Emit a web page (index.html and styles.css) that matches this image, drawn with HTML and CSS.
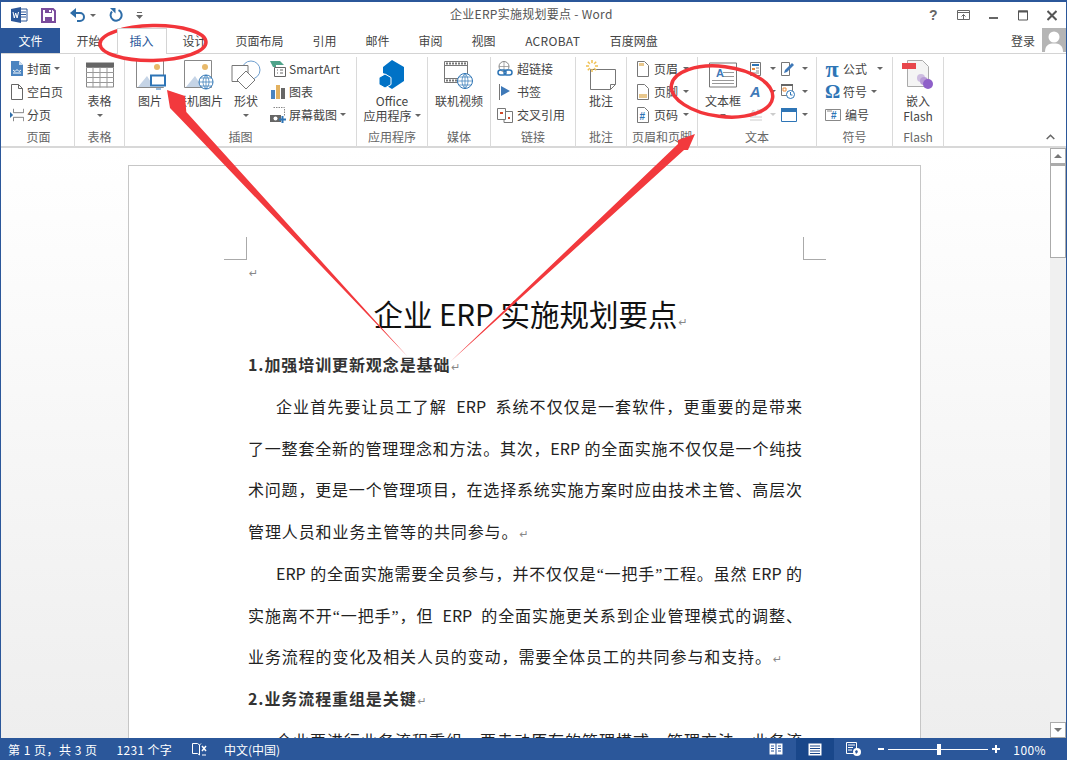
FILE: index.html
```html
<!DOCTYPE html>
<html lang="zh-CN">
<head>
<meta charset="utf-8">
<title>企业ERP实施规划要点 - Word</title>
<link rel="stylesheet" href="styles.css">
</head>
<body>
<div class="window">
  <header class="titlebar">
    <div class="qat">
      <svg class="qi w-logo" width="17" height="16" viewBox="0 0 17 16"><path d="M9 2h7v12H9z" fill="#fff" stroke="#2b579a"/><path d="M10 5h5M10 7.5h5M10 10h5" stroke="#2b579a"/><path d="M0 2l10-2v16L0 14z" fill="#2b579a"/><path d="M2 5l1.3 6 1.4-5 1.4 5L7.500 5" fill="none" stroke="#fff"/></svg>
      <svg class="qi save" width="15" height="15" viewBox="0 0 15 15"><path d="M1 1h11l2 2v11H1z" fill="none" stroke="#7a4c9c" stroke-width="2"/><path d="M4 1h7v4H4zM4 9h7v5H4z" fill="#7a4c9c"/><path d="M8 2h2v2H8z" fill="#fff"/></svg>
      <svg class="qi undo" width="16" height="14" viewBox="0 0 16 14"><path d="M2 5h8a4 4 0 0 1 0 8H7" fill="none" stroke="#2e6da8" stroke-width="2"/><path d="M6 0v10L0 5z" fill="#2e6da8"/></svg>
      <span class="dd qdd"></span>
      <svg class="qi redo" width="14" height="14" viewBox="0 0 14 14"><path d="M9.500 2.200A5.500 5.500 0 1 1 3 3.500" fill="none" stroke="#2e6da8" stroke-width="2"/><path d="M1 0h5.500v5.500z" fill="#2e6da8"/></svg>
      <svg class="qi more" width="7" height="8" viewBox="0 0 7 8"><path d="M1 1.500h5" stroke="#666"/><path d="M0 4h7L3.500 8z" fill="#666"/></svg>
    </div>
    <div class="doc-title">企业ERP实施规划要点 - Word</div>
    <div class="winctl">
      <span class="help">?</span>
      <svg width="13" height="11" viewBox="0 0 13 11"><path d="M.5.500h12v9H.5z" fill="none" stroke="#666"/><path d="M.5 2.500h12" stroke="#666"/><path d="M6.500 9V4.500M4.500 6.500l2-2 2 2" fill="none" stroke="#666"/></svg>
      <svg width="10" height="11" viewBox="0 0 10 11"><path d="M0 8h9" stroke="#666" stroke-width="2"/></svg>
      <svg width="10" height="11" viewBox="0 0 10 11"><path d="M.5 1h9v9h-9z" fill="none" stroke="#555"/><path d="M0 1.500h10" stroke="#555" stroke-width="2"/></svg>
      <svg width="10" height="11" viewBox="0 0 10 11"><path d="M.5 1l9 9M9.500 1l-9 9" stroke="#555" stroke-width="2"/></svg>
    </div>
  </header>

  <nav class="tabs">
    <div class="tab-file">文件</div>
    <div class="tab-list">
      <div class="tab">开始</div>
      <div class="tab tab-active">插入</div>
      <div class="tab">设计</div>
      <div class="tab">页面布局</div>
      <div class="tab">引用</div>
      <div class="tab">邮件</div>
      <div class="tab">审阅</div>
      <div class="tab">视图</div>
      <div class="tab tab-acro">ACROBAT</div>
      <div class="tab">百度网盘</div>
    </div>
    <div class="login">登录</div>
    <svg class="avatar" width="24" height="24" viewBox="0 0 24 24"><path d="M0 0h24v24H0z" fill="#b5b5b5"/><circle cx="12" cy="9" r="5.500" fill="#fff"/><path d="M3 24c0-7 4-8.500 9-8.500s9 1.500 9 8.500z" fill="#fff"/></svg>
  </nav>

  <section class="ribbon">
    <div class="group g-page">
      <div class="gbody col-small">
        <div class="si"><svg width="14" height="16" viewBox="0 0 14 16"><path d="M1 0h8l4 4v11H1z" fill="#4b84c0"/><path d="M9 0v4h4z" fill="#cfe0f0"/><path d="M3 9l2 1.500 2-2 2 2 2-1.500M3 12h8" fill="none" stroke="#fff"/></svg><span>封面</span><i class="dd"></i></div>
        <div class="si"><svg width="14" height="16" viewBox="0 0 14 16"><path d="M1.500.500h7l4 4v11h-11z" fill="#fff" stroke="#666"/><path d="M8.500.500v4h4" fill="none" stroke="#666"/></svg><span>空白页</span></div>
        <div class="si"><svg width="14" height="16" viewBox="0 0 18 16"><path d="M4.500 0v5h13V0M4.500 16v-5h13v5" fill="none" stroke="#666"/><path d="M0 4l4 4-4 4z" fill="#2e6da8"/></svg><span>分页</span></div>
      </div>
      <div class="glabel">页面</div>
    </div>

    <div class="group g-table">
      <div class="gbody center">
        <div class="lb">
          <svg width="28" height="25" viewBox="0 0 28 25"><path d="M0 0h28v5H0z" fill="#666"/><path d="M.5 5h27v19.500H.5z" fill="#fff" stroke="#888"/><path d="M0 10h28M0 15h28M0 20h28M7 5v20M14 5v20M21 5v20" stroke="#999"/></svg>
          <span class="lt">表格</span><i class="dd db"></i>
        </div>
      </div>
      <div class="glabel">表格</div>
    </div>

    <div class="group g-illus">
      <div class="gbody illus">
        <div class="lb w-pic">
          <svg width="30" height="30" viewBox="0 0 30 30"><path d="M.5.500h27v27H.5z" fill="#fff" stroke="#888"/><circle cx="21" cy="7" r="3" fill="#e8b96a"/><path d="M2 27l9-11 7 11z" fill="#c5d4e6"/><path d="M14 16h16v11H14z" fill="#fff"/><path d="M15 15.500h14v10H15z" fill="#fff" stroke="#2e75b6" stroke-width="2"/><path d="M20 29h5" stroke="#2e75b6"/></svg>
          <span class="lt">图片</span>
        </div>
        <div class="lb w-online">
          <svg width="30" height="30" viewBox="0 0 30 30"><path d="M.5.500h27v27H.5z" fill="#fff" stroke="#888"/><circle cx="21" cy="7" r="3" fill="#e8b96a"/><path d="M2 27l9-11 7 11z" fill="#c5d4e6"/><circle cx="22" cy="22" r="7" fill="#fff" stroke="#2e75b6"/><path d="M15 22h14M22 15v14M16.500 18h11M16.500 26h11M22 15c-4 4-4 10 0 14M22 15c4 4 4 10 0 14" fill="none" stroke="#2e75b6" stroke-width=".7"/></svg>
          <span class="lt">联机图片</span>
        </div>
        <div class="lb w-shape">
          <svg width="30" height="30" viewBox="0 0 30 30"><circle cx="20" cy="10" r="9" fill="#fff" stroke="#6f9fcf"/><path d="M1 5.500h16v16H1z" fill="#fff" stroke="#777"/><path d="M15 11l9 9-9 9-9-9z" fill="#fff" stroke="#777"/></svg>
          <span class="lt">形状</span><i class="dd db"></i>
        </div>
        <div class="col-small col-illus">
          <div class="si"><svg width="16" height="16" viewBox="0 0 16 16"><path d="M0 0h10l4 4H6v2H3z" fill="#4fa38a"/><path d="M4.500 6.500h11v9h-11z" fill="#fff" stroke="#666"/><path d="M7 9h1M7 12h1M10 9h3M10 12h3" stroke="#666"/></svg><span>SmartArt</span></div>
          <div class="si"><svg width="16" height="16" viewBox="0 0 16 16"><path d="M1 6h4v9H1z" fill="#4b84c0"/><path d="M6 1h4v14H6z" fill="#e3b15f"/><path d="M11 4h4v11h-4z" fill="#666"/></svg><span>图表</span></div>
          <div class="si"><svg width="16" height="16" viewBox="0 0 16 16"><path d="M3.500.500h11v9" fill="none" stroke="#888" stroke-dasharray="1.500 1"/><path d="M0 8h11v7H0z" fill="#666"/><circle cx="5.500" cy="11.500" r="2" fill="#fff"/><path d="M9 12.500h7M12.500 9v7" stroke="#2e75b6" stroke-width="2"/></svg><span>屏幕截图</span><i class="dd"></i></div>
        </div>
      </div>
      <div class="glabel">插图</div>
    </div>

    <div class="group g-apps">
      <div class="gbody center">
        <div class="lb">
          <svg width="28" height="30" viewBox="0 0 28 30"><path d="M14 0l12 7v14l-12 8-5-3V15l-4-2V7z" fill="#0072c6"/><path d="M7 14l6 3.500v7L7 28l-6-3.500v-7z" fill="#0072c6" stroke="#fff"/></svg>
          <span class="lt">Office</span><span class="lt2">应用程序<i class="dd"></i></span>
        </div>
      </div>
      <div class="glabel">应用程序</div>
    </div>

    <div class="group g-media">
      <div class="gbody center">
        <div class="lb">
          <svg width="30" height="30" viewBox="0 0 30 30"><path d="M.5 1.500h23v21H.5z" fill="#fff" stroke="#777"/><path d="M.5 5.500h23M.5 18.500h23" stroke="#777"/><path d="M2 3.500h20M2 20.500h12" stroke="#777" stroke-width="2" stroke-dasharray="2 1"/><circle cx="21" cy="21" r="7.500" fill="#fff" stroke="#2e75b6"/><path d="M13.500 21h15M21 13.500v15M15 17h12M15 25h12M21 13.500c-4 4-4 11 0 15M21 13.500c4 4 4 11 0 15" fill="none" stroke="#2e75b6" stroke-width=".7"/></svg>
          <span class="lt">联机视频</span>
        </div>
      </div>
      <div class="glabel">媒体</div>
    </div>

    <div class="group g-links">
      <div class="gbody col-small">
        <div class="si"><svg width="16" height="16" viewBox="0 0 16 16"><circle cx="7" cy="5.500" r="5" fill="#fff" stroke="#888"/><path d="M2 5.500h10M7 .5v10" stroke="#888" stroke-width=".7"/><rect x="1" y="9" width="8" height="5" rx="2.500" fill="none" stroke="#2e75b6" stroke-width="1.500"/><rect x="7" y="9" width="8" height="5" rx="2.500" fill="none" stroke="#2e75b6" stroke-width="1.500"/></svg><span>超链接</span></div>
        <div class="si"><svg width="16" height="16" viewBox="0 0 16 16"><path d="M2.500 0v16" stroke="#777"/><path d="M4 2l9 5-9 5z" fill="#3f79b8"/></svg><span>书签</span></div>
        <div class="si"><svg width="16" height="16" viewBox="0 0 16 16"><path d="M.5 1.500h8v11h-8zM9 4.500h6.500v11H7v-3" fill="#fff" stroke="#777"/><path d="M3 6h3" stroke="#d2492a" stroke-width="2"/><path d="M11 11h2" stroke="#d2492a" stroke-width="2"/></svg><span>交叉引用</span></div>
      </div>
      <div class="glabel">链接</div>
    </div>

    <div class="group g-comment">
      <div class="gbody center">
        <div class="lb">
          <svg width="30" height="30" viewBox="0 0 30 30"><path d="M4.500 9.500h25v15l-5 5h-20z" fill="#fff" stroke="#777"/><path d="M24.500 29.500v-5h5" fill="none" stroke="#777"/><path d="M6 0v12M0 6h12M1.800 1.800l8.400 8.400M10.200 1.800l-8.400 8.400" stroke="#f0c050" stroke-width="1.500"/><circle cx="6" cy="6" r="3" fill="#fff"/></svg>
          <span class="lt">批注</span>
        </div>
      </div>
      <div class="glabel">批注</div>
    </div>

    <div class="group g-hf">
      <div class="gbody col-small">
        <div class="si"><svg width="12" height="16" viewBox="0 0 12 16"><path d="M.5.500h7l4 4v11H.5z" fill="#fff" stroke="#777"/><path d="M2 2h5v3H2z" fill="#e8c78c"/></svg><span>页眉</span><i class="dd"></i></div>
        <div class="si"><svg width="12" height="16" viewBox="0 0 12 16"><path d="M.5.500h7l4 4v11H.5z" fill="#fff" stroke="#777"/><path d="M2 10h8v4H2z" fill="#e8c78c"/></svg><span>页脚</span><i class="dd"></i></div>
        <div class="si"><svg width="12" height="16" viewBox="0 0 12 16"><path d="M.5.500h7l4 4v11H.5z" fill="#fff" stroke="#777"/><text class="hash" x="2.500" y="12.500">#</text></svg><span>页码</span><i class="dd"></i></div>
      </div>
      <div class="glabel">页眉和页脚</div>
    </div>

    <div class="group g-text">
      <div class="gbody text-body">
        <div class="lb w-tb">
          <svg width="28" height="25" viewBox="0 0 28 25"><path d="M.5.500h27v24H.5z" fill="#fff" stroke="#777"/><path d="M14 10h11M14 14h11M3 18h22M3 21h22" stroke="#999"/><text class="tb-a" x="7" y="14">A</text></svg>
          <span class="lt">文本框</span><i class="dd db"></i>
        </div>
        <div class="tcol tcol-a">
          <div class="ti"><svg width="12" height="14" viewBox="0 0 12 14"><path d="M.5.500h10v13H.5z" fill="#fff" stroke="#777"/><path d="M2 2h7v2H2z" fill="#2e75b6"/><path d="M2 6h3v2H2z" fill="#e88a3a"/><path d="M6 6h3M6 9h3M2 11h7" stroke="#888"/></svg><i class="dd"></i></div>
          <div class="ti"><svg width="12" height="14" viewBox="0 0 14 14"><text class="wa" x="0" y="13">A</text></svg><i class="dd"></i></div>
          <div class="ti dim"><svg width="12" height="14" viewBox="0 0 12 14"><text class="dc" x="0" y="8">A</text><path d="M7 2h5M7 5h5M0 9h12M0 12h12" stroke="#ccc"/></svg><i class="dd"></i></div>
        </div>
        <div class="tcol tcol-b">
          <div class="ti"><svg width="14" height="15" viewBox="0 0 14 15"><path d="M.5 1.500h8v13h-8z" fill="#fff" stroke="#777"/><path d="M3 12l1-3 7-7 2 2-7 7z" fill="#3f79b8"/></svg><i class="dd"></i></div>
          <div class="ti"><svg width="14" height="15" viewBox="0 0 14 15"><path d="M.5.500h11v11H.5z" fill="#fff" stroke="#777"/><path d="M0 0h12v2H0z" fill="#666"/><path d="M2 4h3v3H2z" fill="none" stroke="#e88a3a"/><circle cx="9.500" cy="10.500" r="4" fill="#fff" stroke="#2e75b6"/><path d="M9.500 8v3h2" fill="none" stroke="#2e75b6"/></svg><i class="dd"></i></div>
          <div class="ti"><svg width="16" height="14" viewBox="0 0 16 14"><path d="M.5.500h15v13H.5z" fill="#fff" stroke="#2e75b6"/><path d="M0 0h16v4H0z" fill="#2e75b6"/></svg><i class="dd dd-last"></i></div>
        </div>
      </div>
      <div class="glabel">文本</div>
    </div>

    <div class="group g-sym">
      <div class="gbody col-small sym">
        <div class="si"><span class="sg sg-pi">π</span><span>公式</span><i class="dd far"></i></div>
        <div class="si"><span class="sg">Ω</span><span>符号</span><i class="dd"></i></div>
        <div class="si"><svg class="num" width="16" height="12" viewBox="0 0 16 12"><path d="M.5.500h15v11H.5z" fill="#fff" stroke="#888"/><path d="M2 2h5" stroke="#888"/><text class="hash" x="6" y="10">#</text></svg><span>编号</span></div>
      </div>
      <div class="glabel">符号</div>
    </div>

    <div class="group g-flash">
      <div class="gbody center">
        <div class="lb">
          <svg width="32" height="30" viewBox="0 0 32 30"><path d="M5.500.500h15l6 6v20h-21z" fill="#f4f4f4" stroke="#aaa"/><path d="M0 3h14v6H0z" fill="#e8474c"/><circle cx="19" cy="18" r="4" fill="#cdbce0"/><circle cx="22" cy="21" r="4" fill="#b79ad6"/><circle cx="26" cy="24" r="5" fill="#8e5fc9"/></svg>
          <span class="lt">嵌入</span><span class="lt2">Flash</span>
        </div>
      </div>
      <div class="glabel">Flash</div>
    </div>
    <svg class="collapse" width="9" height="6" viewBox="0 0 9 6"><path d="M.7 5l3.800-3.800L8.300 5" fill="none" stroke="#666" stroke-width="1.500"/></svg>
  </section>

  <main class="workspace">
    <div class="doc-scroll">
      <article class="page">
        <div class="crops"><span class="crop crop-l"></span><span class="crop crop-r"></span></div>
        <p class="empty"><span class="pm">↵</span></p>
        <h1 class="doc-h">企业 ERP 实施规划要点<span class="pm">↵</span></h1>
        <p class="h2">1.加强培训更新观念是基础<span class="pm">↵</span></p>
        <p class="ln jf ind">企业首先要让员工了解&nbsp; ERP&nbsp; 系统不仅仅是一套软件，更重要的是带来</p>
        <p class="ln jf">了一整套全新的管理理念和方法。其次，ERP 的全面实施不仅仅是一个纯技</p>
        <p class="ln jf">术问题，更是一个管理项目，在选择系统实施方案时应由技术主管、高层次</p>
        <p class="ln wide">管理人员和业务主管等的共同参与。<span class="pm">↵</span></p>
        <p class="ln jf ind">ERP 的全面实施需要全员参与，并不仅仅是<span class="q">“</span>一把手<span class="q">”</span>工程。虽然 ERP 的</p>
        <p class="ln jf">实施离不开<span class="q">“</span>一把手<span class="q">”</span>，但&nbsp; ERP&nbsp; 的全面实施更关系到企业管理模式的调整、</p>
        <p class="ln wide">业务流程的变化及相关人员的变动，需要全体员工的共同参与和支持。<span class="pm">↵</span></p>
        <p class="h2">2.业务流程重组是关键<span class="pm">↵</span></p>
        <p class="ln jf ind">企业要进行业务流程重组，要走动原有的管理模式、管理方法，业务流</p>
      </article>
    </div>
    <aside class="vscroll">
      <div class="sb-btn"><i class="up"></i></div>
      <div class="sb-thumb"></div>
      <div class="sb-track"></div>
      <div class="sb-btn"><i class="down"></i></div>
    </aside>
  </main>

  <footer class="status">
    <span class="st-a">第 1 页，共 3 页</span>
    <span class="st-b">1231 个字</span>
    <svg class="st-c" width="15" height="15" viewBox="0 0 15 15"><path d="M.5 1.500h5l2 1.500v10l-2-1.500h-5zM7.500 3l1.500-1.500" fill="none" stroke="#fff"/><path d="M10 4l4 5M14 4l-4 5" stroke="#fff" stroke-width="1.500"/><path d="M10 13h4" stroke="#fff"/></svg>
    <span class="st-d">中文(中国)</span>
    <div class="st-right">
      <svg class="v-read" width="14" height="14" viewBox="0 0 14 14"><path d="M.5 1.500h6v11h-6zM7.500 1.500h6v11h-6z" fill="#fff"/><path d="M2 4h3M2 6.500h3M2 9h3M9 4h3M9 6.500h3M9 9h3" stroke="#2b579a"/></svg>
      <div class="v-print"><svg width="14" height="13" viewBox="0 0 14 13"><path d="M.5.500h13v12H.5z" fill="#fff"/><path d="M2 3h10M2 5.500h10M2 8h10M2 10.500h10" stroke="#19478a"/></svg></div>
      <svg class="v-web" width="15" height="14" viewBox="0 0 15 14"><path d="M.5.500h10v11H.5z" fill="none" stroke="#fff"/><path d="M2 3h7M2 5.500h5M2 8h4" stroke="#fff"/><circle cx="11" cy="10" r="4" fill="#fff"/><path d="M9 9l2-1 1 2-2 2z" fill="#2b579a"/></svg>
      <span class="zm-minus"></span>
      <div class="slider"><span class="thumb"></span></div>
      <span class="zm-plus"></span>
      <span class="zm-val">100%</span>
    </div>
  </footer>
</div>

<svg class="annot" width="1067" height="760" viewBox="0 0 1067 760">
  <ellipse cx="153" cy="43" rx="53" ry="17.500" transform="rotate(-1 153 43)"/>
  <ellipse cx="722" cy="91.500" rx="51" ry="25" transform="rotate(7 722 91.500)"/>
  <polygon points="408,357 179.700,118 170,108 167,90 185,96 186.300,112"/>
  <polygon points="450,362 684,150 688,150 695,134 678,140 678,144"/>
</svg>
</body>
</html>
```

FILE: styles.css
```css
* { box-sizing: border-box; }
html, body { margin: 0; padding: 0; }
body {
  width: 1067px;
  height: 760px;
  overflow: hidden;
  position: relative;
  background: #fff;
  font-family: "Noto Sans CJK SC", "Liberation Sans", sans-serif;
  font-size: 12px;
  color: #444;
}
.window {
  width: 1067px;
  height: 760px;
  display: flex;
  flex-direction: column;
  border: 1px solid #2b579a;
  border-top-width: 2px;
  border-bottom: 0;
}
i { display: block; font-style: normal; }

/* title bar */
.titlebar { height: 26px; display: flex; align-items: center; position: relative; flex: none; }
.qat { display: flex; align-items: center; padding-left: 10px; }
.qi { display: block; flex: none; }
.save { margin-left: 13px; }
.undo { margin-left: 14px; }
.qdd { margin-left: 4px; }
.redo { margin-left: 13px; }
.more { margin-left: 13px; }
.doc-title { position: absolute; left: 449px; top: 3px; line-height: 17px; color: #555; font-size: 12px; white-space: nowrap; letter-spacing: .28px; }
.winctl { margin-left: auto; display: flex; align-items: center; gap: 19px; padding-right: 9px; }
.help { font-family: "Liberation Sans", sans-serif; font-weight: 700; font-size: 14px; color: #666; width: 8px; margin-right: 1px; }
.dd { width: 0; height: 0; border: 3px solid transparent; border-top: 3px solid #666; border-bottom: 0; flex: none; }

/* tabs */
.tabs { height: 26px; display: flex; flex: none; position: relative; border-bottom: 1px solid #d4d4d4; }
.tab-file { width: 59px; height: 25px; background: #2b579a; color: #fff; text-align: center; line-height: 25px; }
.tab-list { display: flex; margin-left: 2px; }
.tab { padding: 0 14.500px; line-height: 25px; white-space: nowrap; height: 26px; color: #444; font-size: 12px; }
.tab-active { color: #2b579a; background: #fff; border: 1px solid #d4d4d4; border-bottom: 0; padding: 0 12px; margin: 0 1.500px; line-height: 24px; position: relative; z-index: 1; }
.tab-acro { letter-spacing: .3px; padding: 0 15px; }
.login { margin-left: auto; line-height: 25px; margin-right: 7px; color: #444; }
.avatar { display: block; margin-right: 0; }

/* ribbon */
.ribbon { height: 94px; display: flex; flex: none; position: relative; border-bottom: 2px solid #d8d8d8; padding-left: 2px; }
.group { display: flex; flex-direction: column; height: 90px; margin-top: 3px; border-right: 1px solid #dadada; flex: none; }
.gbody { flex: 1; min-height: 0; }
.glabel { height: 19px; line-height: 17px; text-align: center; color: #666; white-space: nowrap; }
.g-page { width: 72px; }
.g-table { width: 50px; }
.g-illus { width: 232px; }
.g-apps { width: 71px; }
.g-media { width: 63px; }
.g-links { width: 85px; }
.g-comment { width: 51px; }
.g-hf { width: 71px; }
.g-text { width: 119px; }
.g-sym { width: 76px; }
.g-flash { width: 51px; }
.center { display: flex; justify-content: center; }
.lb { display: flex; flex-direction: column; align-items: center; padding-top: 3px; color: #444; line-height: 15px; white-space: nowrap; }
.lb svg { display: block; height: 30px; margin-bottom: 3px; flex: none; }
.lt, .lt2 { display: flex; align-items: center; gap: 3px; height: 15px; }
.db { margin-top: 6px; }
.col-small { display: flex; flex-direction: column; padding: 0 0 0 7px; }
.si { height: 23px; flex: none; display: flex; align-items: center; gap: 3px; white-space: nowrap; color: #444; }
.si svg { flex: none; display: block; }
.g-hf .col-small { padding-left: 10px; }
.g-hf .si { gap: 5px; }
.g-links .col-small { padding-left: 6px; }
.g-links .si { gap: 4px; }
.illus { display: flex; padding-left: 11px; }
.w-pic { width: 38px; align-items: flex-start; }
.w-pic .lt { margin-left: 2px; }
.w-online { width: 50px; }
.w-shape { width: 42px; margin-left: 1px; }
.col-illus { padding: 0 0 0 3px; }
.w-tb { width: 50px; margin-left: 0; }
.text-body { display: flex; }
.tcol { display: flex; flex-direction: column; flex: none; }
.tcol-a { width: 28px; margin-left: 2px; }
.tcol-b { margin-left: 3px; width: 30px; }
.ti { height: 23px; flex: none; display: flex; align-items: center; gap: 8px; }
.tcol-b .ti { gap: 7px; }
.dd-last { margin-left: -2px; }
.ti svg { display: block; flex: none; overflow: visible; }
.wa { font: italic 700 17px "Liberation Sans", sans-serif; fill: #3f79b8; }
.dc { font: 700 9px "Liberation Sans", sans-serif; fill: #ccc; }
.dim .dd { border-top-color: #ccc; }
.tb-a { font: 700 11px "Liberation Sans", sans-serif; fill: #3f79b8; }
.hash { font: 700 10px "Liberation Sans", sans-serif; fill: #2e75b6; }
.sym { padding-left: 8px; }
.sym .si { gap: 4px; }
.sg { font: 700 19px "Liberation Serif", serif; color: #2e75b6; width: 14px; text-align: center; line-height: 20px; }
.sg-pi { font-size: 24px; }
.far { margin-left: 6px; }
.num { width: 16px; }
.collapse { position: absolute; right: 11px; bottom: 6px; display: block; }

/* document */
.workspace { flex: 1; min-height: 0; display: flex; }
.doc-scroll { flex: 1; min-width: 0; overflow: hidden; padding: 17px 0 0 127px; background: linear-gradient(#fff, #eee); }
.page { width: 793px; height: 700px; background: #fff; border: 1px solid #c6c6c6; padding: 71px 118px 0 119px; color: #222; }
.crops { height: 23px; margin: 0 -24px; display: flex; justify-content: space-between; }
.crop { width: 23px; height: 23px; border-bottom: 1px solid #aaa; }
.crop-l { border-right: 1px solid #aaa; }
.crop-r { border-left: 1px solid #aaa; }
.empty { margin: 0; height: 24px; line-height: 24px; }
.pm { color: #888; font: 11px "DejaVu Sans", sans-serif; margin-left: 1px; letter-spacing: 0; }
.doc-h { margin: 0; height: 60px; line-height: 58px; font-size: 29.500px; font-weight: 400; text-align: center; color: #111; white-space: nowrap; padding-left: 11px; }
.h2 { margin: 0; height: 41.750px; line-height: 41.750px; font-size: 16px; font-weight: 700; color: #333; white-space: nowrap; letter-spacing: .9px; }
.ln { margin: 0; height: 41.750px; line-height: 41.750px; font-size: 16px; white-space: nowrap; overflow: hidden; }
.wide { letter-spacing: .9px; }
.jf { white-space: normal; text-align: justify; text-align-last: justify; }
.ind { padding-left: 28px; }
.q { font-family: "Liberation Serif", serif; }

/* scrollbar */
.vscroll { width: 16px; flex: none; display: flex; flex-direction: column; background: #f0f0f0; }
.sb-btn { height: 16px; background: #fff; border: 1px solid #ababab; display: flex; align-items: center; justify-content: center; flex: none; }
.sb-thumb { height: 94px; background: #fff; border: 1px solid #ababab; border-top: 2px solid #ababab; flex: none; }
.sb-track { flex: 1; }
.up { width: 0; height: 0; border: 4px solid transparent; border-bottom: 4px solid #777; border-top: 0; }
.down { width: 0; height: 0; border: 4px solid transparent; border-top: 4px solid #777; border-bottom: 0; }

/* status bar */
.status { height: 22px; flex: none; background: #2b579a; color: #fff; display: flex; align-items: center; margin: 0 -1px; padding-left: 8px; font-size: 12px; position: relative; }
.st-a { letter-spacing: .5px; }
.st-b { margin-left: 19px; letter-spacing: .3px; }
.st-c { margin-left: 20px; display: block; }
.st-d { margin-left: 17px; }
.st-right { margin-left: auto; display: flex; align-items: center; height: 22px; padding-right: 21px; }
.st-right svg { display: block; }
.v-print { width: 38px; height: 22px; background: #19478a; display: flex; align-items: center; justify-content: center; margin-left: 13px; }
.v-web { margin-left: 12px; }
.zm-minus { width: 6px; height: 2px; background: #fff; margin-left: 17px; }
.slider { width: 100px; height: 1px; background: #fff; margin-left: 4px; position: relative; }
.thumb { position: absolute; left: 49px; top: -5px; width: 4px; height: 11px; background: #fff; }
.zm-plus { width: 8px; height: 8px; margin-left: 4px; background: linear-gradient(#fff, #fff) center / 8px 2px no-repeat, linear-gradient(#fff, #fff) center / 2px 8px no-repeat; }
.zm-val { margin-left: 13px; letter-spacing: .4px; }

/* annotation layer */
.annot { position: absolute; left: 0; top: 0; pointer-events: none; }
.annot ellipse { fill: none; stroke: #f2353a; stroke-width: 3.500; }
.annot polygon { fill: #f2393d; }
```
